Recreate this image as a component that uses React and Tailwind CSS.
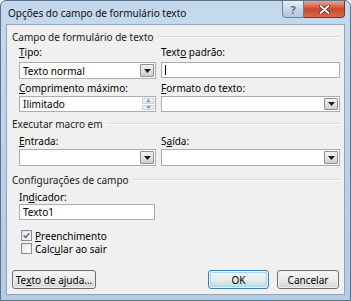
import React from 'react'

function U({ children }) {
  return <span className="underline underline-offset-[1px]">{children}</span>
}

function Label({ children }) {
  return <div className="h-[14px] leading-[14px] text-[10px] text-black whitespace-nowrap">{children}</div>
}

function Header({ children, className = '' }) {
  return (
    <div className={`flex items-center gap-[4px] h-[14px] pl-[5px] pr-[4px] ${className}`}>
      <span className="leading-[14px] text-[10px] text-[#1a1a1a] whitespace-nowrap">{children}</span>
      <div className="flex-1 flex flex-col">
        <div className="h-px bg-[#d7dde3]" />
        <div className="h-px bg-white" />
      </div>
    </div>
  )
}

function Arrow() {
  return (
    <svg width="7" height="4" viewBox="0 0 7 4">
      <path d="M0 0h7L3.5 4z" fill="#1b1b1b" />
    </svg>
  )
}

function Combo({ value, h = 'h-[17px]', className = '' }) {
  return (
    <div className={`${h} flex bg-white border border-[#abadb3] ${className}`}>
      <div className="flex-1 pl-[3px] flex items-center text-[10px] text-black leading-none">{value}</div>
      <div className="w-[14px] m-px flex items-center justify-center border border-[#8e8f8f] rounded-[1px] bg-gradient-to-b from-[#f2f2f2] via-[#e2e2e2] to-[#cfcfcf]">
        <Arrow />
      </div>
    </div>
  )
}

function Spin({ value }) {
  return (
    <div className="h-[16px] flex bg-white border border-[#abadb3]">
      <div className="flex-1 pl-[3px] flex items-center text-[10px] text-black leading-none">{value}</div>
      <div className="w-[12px] m-px flex flex-col gap-px">
        <div className="flex-1 flex items-center justify-center border border-[#c9d3dd] bg-gradient-to-b from-[#f6f8fa] to-[#e3e8ee]">
          <svg width="5" height="3" viewBox="0 0 5 3"><path d="M0 3h5L2.5 0z" fill="#8a9cb0" /></svg>
        </div>
        <div className="flex-1 flex items-center justify-center border border-[#c9d3dd] bg-gradient-to-b from-[#f6f8fa] to-[#e3e8ee]">
          <svg width="5" height="3" viewBox="0 0 5 3"><path d="M0 0h5L2.5 3z" fill="#8a9cb0" /></svg>
        </div>
      </div>
    </div>
  )
}

function TextBox({ value, caret }) {
  return (
    <div className="h-[16px] flex items-center bg-white border border-[#abadb3] pl-[3px] text-[10px] text-black leading-none">
      {caret && <div className="w-px h-[10px] bg-black" />}
      {value}
    </div>
  )
}

function Check({ checked, children }) {
  return (
    <div className="h-[13px] flex items-center gap-[3px] pl-[14px]">
      <div className="w-[11px] h-[11px] border border-[#8f8f8f] bg-gradient-to-br from-[#dcdcdc] to-[#fbfbfb] p-px">
        <div className="w-full h-full bg-gradient-to-br from-[#e8e8e8] to-white flex items-center justify-center">
          {checked && (
            <svg width="8" height="7" viewBox="0 0 8 7">
              <path d="M0.8 3.6 L3 5.8 L7.2 0.8" fill="none" stroke="#4a5f97" strokeWidth="1.6" />
            </svg>
          )}
        </div>
      </div>
      <span className="text-[10px] text-black leading-none whitespace-nowrap">{children}</span>
    </div>
  )
}

function Button({ children, w, primary }) {
  return (
    <div
      className={`${w} h-[19px] rounded-[3px] border ${primary ? 'border-[#3c7fb1]' : 'border-[#707070]'} p-px`}
    >
      <div className={`w-full h-full rounded-[2px] flex items-center justify-center text-[10px] text-black leading-none ${primary ? 'border border-[#a6d7f3] bg-gradient-to-b from-[#eef4f8] via-[#e6ecf0] to-[#d2d9df]' : 'bg-gradient-to-b from-[#f4f4f4] via-[#ebebeb] to-[#d6d6d6]'}`}>
        {children}
      </div>
    </div>
  )
}

export default function App() {
  return (
    <div className="w-[351px] h-[301px] font-['Noto_Sans',sans-serif] flex flex-col rounded-t-[6px] border border-[#5f7288] bg-gradient-to-b from-[#c5d9ee] via-[#bcd2ea] to-[#b4cbe4] overflow-hidden">
      {/* title bar */}
      <div className="h-[23px] flex items-start">
        <div className="flex-1 pl-[7px] pt-[5px] text-[10px] leading-[14px] text-[#101010] whitespace-nowrap">
          Opções do campo de formulário texto
        </div>
        <div className="flex mr-[5px] -mt-px">
          <div className="w-[22px] h-[18px] rounded-bl-[4px] border border-[#6b7f99] bg-gradient-to-b from-[#e6eef8] via-[#c9d7e8] to-[#b3c6de] flex items-center justify-center text-[11px] font-bold text-[#5a6a80] leading-none">
            ?
          </div>
          <div className="w-[41px] h-[18px] rounded-br-[4px] border border-l-0 border-[#6b3a32] bg-gradient-to-b from-[#e8a594] via-[#c9462d] to-[#d86a4c] flex items-center justify-center">
            <svg width="11" height="9" viewBox="0 0 11 9">
              <path d="M1.5 1 L9.5 8 M9.5 1 L1.5 8" stroke="#3b1b14" strokeWidth="3" strokeLinecap="round" />
              <path d="M1.5 1 L9.5 8 M9.5 1 L1.5 8" stroke="white" strokeWidth="1.8" strokeLinecap="round" />
            </svg>
          </div>
        </div>
      </div>

      {/* client area */}
      <div className="flex-1 mx-[5px] mb-[5px] border border-[#8fa3ba] bg-[#f0f0f0] flex flex-col">
        <Header className="mt-[5px]">Campo de formulário de texto</Header>
        <div className="ml-[12px] grid grid-cols-[137px_179px] gap-x-[5px]">
          <div className="flex flex-col">
            <div className="mt-px"><Label><U>T</U>ipo:</Label></div>
            <Combo value="Texto normal" className="mt-[3px]" />
            <div className="mt-[2px]"><Label><U>C</U>omprimento máximo:</Label></div>
            <div className="mt-px"><Spin value="Ilimitado" /></div>
          </div>
          <div className="flex flex-col">
            <div className="mt-px"><Label>Text<U>o</U> padrão:</Label></div>
            <div className="mt-[3px]"><TextBox caret /></div>
            <div className="mt-[3px]"><Label><U>F</U>ormato do texto:</Label></div>
            <Combo value="" className="mt-px" h="h-[16px]" />
          </div>
        </div>

        <Header className="mt-[5px]">Executar macro em</Header>
        <div className="ml-[12px] grid grid-cols-[137px_179px] gap-x-[5px]">
          <div className="flex flex-col">
            <div className="mt-[3px]"><Label><U>E</U>ntrada:</Label></div>
            <Combo value="" className="mt-px" />
          </div>
          <div className="flex flex-col">
            <div className="mt-[3px]"><Label>S<U>a</U>ída:</Label></div>
            <Combo value="" className="mt-px" />
          </div>
        </div>

        <Header className="mt-[7px]">Configurações de campo</Header>
        <div className="ml-[12px] w-[136px] flex flex-col">
          <div className="mt-[3px]"><Label>In<U>d</U>icador:</Label></div>
          <TextBox value="Texto1" />
        </div>
        <div className="mt-[9px]">
          <Check checked><U>P</U>reenchimento</Check>
        </div>
        <Check>Calc<U>u</U>lar ao sair</Check>

        <div className="mt-auto mb-[5px] flex items-center pl-[5px] pr-[5px]">
          <Button w="w-[84px]">Te<U>x</U>to de ajuda...</Button>
          <div className="flex-1" />
          <Button w="w-[61px]" primary>OK</Button>
          <div className="w-[8px]" />
          <Button w="w-[62px]">Cancelar</Button>
        </div>
      </div>
    </div>
  )
}
